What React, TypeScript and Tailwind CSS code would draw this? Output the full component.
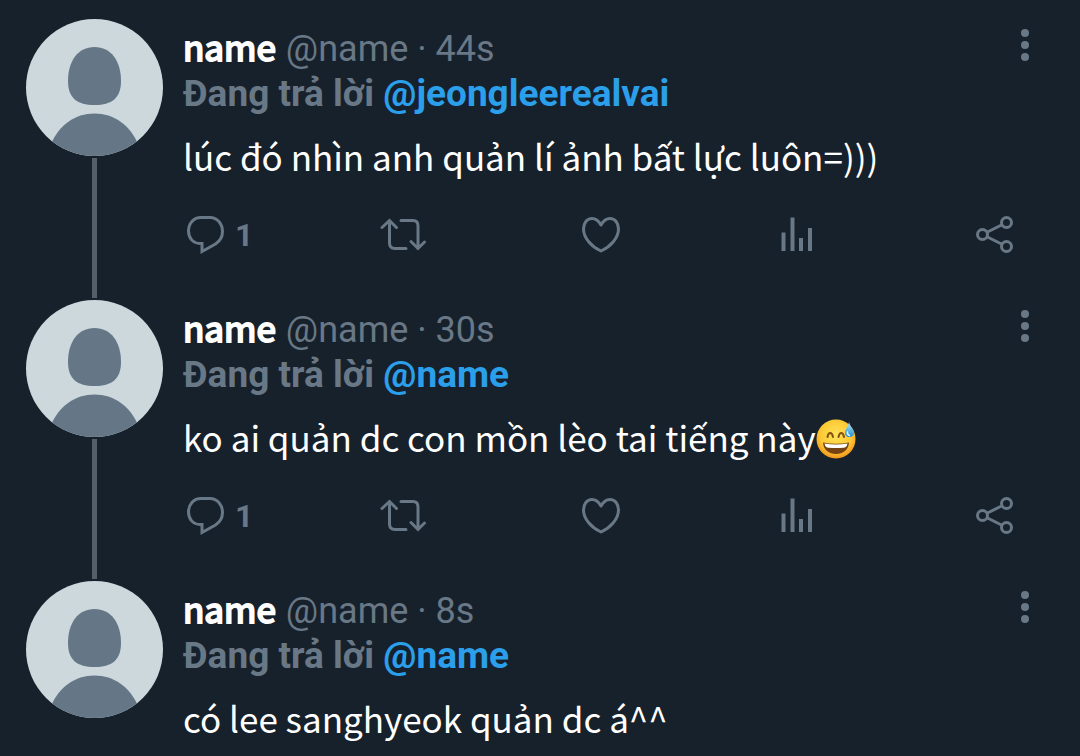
type Tweet = {
  id: number;
  time: string;
  replyTo: string;
  text: string;
  emoji?: boolean;
  replies?: number;
};

const tweets: Tweet[] = [
  { id: 1, time: "44s", replyTo: "@jeongleerealvai", text: "lúc đó nhìn anh quản lí ảnh bất lực luôn=)))", replies: 1 },
  { id: 2, time: "30s", replyTo: "@name", text: "ko ai quản dc con mồn lèo tai tiếng này", emoji: true, replies: 1 },
  { id: 3, time: "8s", replyTo: "@name", text: "có lee sanghyeok quản dc á^^" },
];

const Avatar = () => (
  <svg viewBox="0 0 137 137" className="block size-[137px] shrink-0 rounded-full bg-[#cdd8dd]" aria-hidden="true">
    <path
      d="M68.5 28C85 28 95 42 95 62C95 79 86 86 68.5 86C51 86 42 79 42 62C42 42 52 28 68.5 28Z"
      fill="#657786"
    />
    <path d="M25 137V125C33 106 49 94.500 68.500 94.500C88 94.500 104 106 112 125V137Z" fill="#657786" />
  </svg>
);

const SweatEmoji = () => (
  <svg viewBox="0 0 40 40" className="inline-block size-10 align-[-7px]" role="img" aria-label="grinning face with sweat">
    <defs>
      <radialGradient id="face" cx="50%" cy="40%" r="62%">
        <stop offset="0" stopColor="#ffe457" />
        <stop offset="0.65" stopColor="#fdc834" />
        <stop offset="1" stopColor="#ee901b" />
      </radialGradient>
      <linearGradient id="drop" x1="0" y1="0" x2="0" y2="1">
        <stop offset="0" stopColor="#b5e6f7" />
        <stop offset="1" stopColor="#248fd0" />
      </linearGradient>
    </defs>
    <circle cx="20" cy="20" r="19.500" fill="url(#face)" />
    <path d="M11.500 18C12.300 12.500 16 12.500 17 18M22.500 18C23.500 12.500 27 12.500 28 18" fill="none" stroke="#87500f" strokeWidth="2" strokeLinecap="round" />
    <path d="M7 23.500Q20 26 33 23.500C32.500 31 27 35 20 35C13 35 7.500 31 7 23.500Z" fill="#774211" />
    <path d="M8.500 24.500Q20 26.500 31.500 24.500C31 27.500 29.500 28.500 27.500 28.700Q20 29.500 12.500 28.700C10.500 28.500 9 27.500 8.500 24.500Z" fill="#fff" />
    <path d="M33 3C34 8 38 10 38 14C38 16.500 36 18 33.500 18C30.500 18 28.500 16 29 13C29.500 10 32 8 33 3Z" fill="url(#drop)" />
    <path d="M31.500 13C31 15 32 16 33.500 16.500" fill="none" stroke="#d9f4fc" strokeWidth="1.500" strokeLinecap="round" />
  </svg>
);

const iconClass = "block size-11 shrink-0 overflow-visible fill-none stroke-current stroke-3";

const ReplyIcon = () => (
  <svg viewBox="0 0 44 44" className={iconClass}>
    <path d="M18 4.500H27C34.500 4.500 39.500 11 39.500 18.500C39.500 24 37 28 32.500 31L19 38.500V30.500H17C10 30.500 5.500 25 5.500 18C5.500 10.500 10.500 4.500 18 4.500Z" />
  </svg>
);

const RetweetIcon = () => (
  <svg viewBox="0 0 44 44" className={iconClass} strokeLinecap="round">
    <path d="M1 14.500L8.500 7.500L15.500 14.500M8.500 8V30C8.500 33.500 10.500 35.500 14 35.500H25M20 7.500H32C35.500 7.500 37 9.500 37 13V35.500M30 28.500L37 35.500L43.500 29" />
  </svg>
);

const HeartIcon = () => (
  <svg viewBox="0 0 44 44" className={iconClass} strokeLinejoin="round">
    <path d="M22 12C19.500 7.500 16.500 5.500 13 5.500C8 5.500 4.500 10 4.500 16C4.500 25 12.500 33.500 22 38C31.500 33.500 39.500 25 39.500 16C39.500 10 36 5.500 31 5.500C27.500 5.500 24.500 7.500 22 12Z" />
  </svg>
);

const StatsIcon = () => (
  <svg viewBox="0 0 44 44" className="block size-11 shrink-0 fill-current">
    <path d="M5.500 19.500h4V38H5.500zM14.500 4.500h4V38h-4zM23 25h4V38h-4zM32 15h4V38h-4z" />
  </svg>
);

const ShareIcon = () => (
  <svg viewBox="0 0 44 44" className={iconClass}>
    <circle cx="8.500" cy="21.500" r="5" />
    <circle cx="32.500" cy="9.500" r="5" />
    <circle cx="32.500" cy="33.500" r="5" />
    <path d="M13.500 19L27.500 12M13.500 24L27.500 31" />
  </svg>
);

const Actions = ({ replies }: { replies: number }) => (
  <div className="mt-[29px] flex pr-[19px] pb-[43px]">
    <div className="flex-1">
      <button type="button" aria-label="Reply" className="flex items-center gap-2">
        <ReplyIcon />
        <span className="text-[32px] leading-10 font-bold">{replies}</span>
      </button>
    </div>
    <div className="flex-1">
      <button type="button" aria-label="Retweet" className="block">
        <RetweetIcon />
      </button>
    </div>
    <div className="flex-1">
      <button type="button" aria-label="Like" className="block">
        <HeartIcon />
      </button>
    </div>
    <div className="flex-1">
      <button type="button" aria-label="Stats" className="block">
        <StatsIcon />
      </button>
    </div>
    <button type="button" aria-label="Share" className="block">
      <ShareIcon />
    </button>
  </div>
);

const TweetItem = ({ tweet, last }: { tweet: Tweet; last: boolean }) => (
  <article className="flex gap-5 pr-[43px] pl-[26px]">
    <div className="flex flex-col items-center">
      <Avatar />
      {!last && <div className="my-[2px] w-[5px] flex-1 bg-[#555f68]" />}
    </div>
    <div className="min-w-0 flex-1 pt-2">
      <div className="flex items-start justify-between">
        <div className="flex items-baseline gap-[10px] text-4xl">
          <a
            href="#profile"
            className="font-['Noto_Sans_CJK_SC',sans-serif] text-[35px] leading-none text-white [-webkit-text-stroke:2px_currentColor]"
          >
            name
          </a>
          <span className="leading-[45px]">@name · {tweet.time}</span>
        </div>
        <button type="button" aria-label="More" className="flex h-9 w-6 flex-col items-center justify-center gap-1">
          <span className="size-2 rounded-full bg-current" />
          <span className="size-2 rounded-full bg-current" />
          <span className="size-2 rounded-full bg-current" />
        </button>
      </div>
      <p className="text-[37px] leading-[43px] font-bold">
        Đang trả lời{" "}
        <a href="#replying" className="text-[#2b9fea]">
          {tweet.replyTo}
        </a>
      </p>
      <p className="mt-[13px] font-['Noto_Sans_CJK_SC',sans-serif] text-[35px] leading-14 text-white">
        {tweet.text}
        {tweet.emoji && <SweatEmoji />}
      </p>
      {tweet.replies && <Actions replies={tweet.replies} />}
    </div>
  </article>
);

const App = () => {
  return (
    <main className="min-h-screen bg-[#17212b] pt-[19px] font-[Roboto,sans-serif] text-[#697886]">
      {tweets.map((tweet, i) => (
        <TweetItem key={tweet.id} tweet={tweet} last={i === tweets.length - 1} />
      ))}
    </main>
  );
};

export default App;
